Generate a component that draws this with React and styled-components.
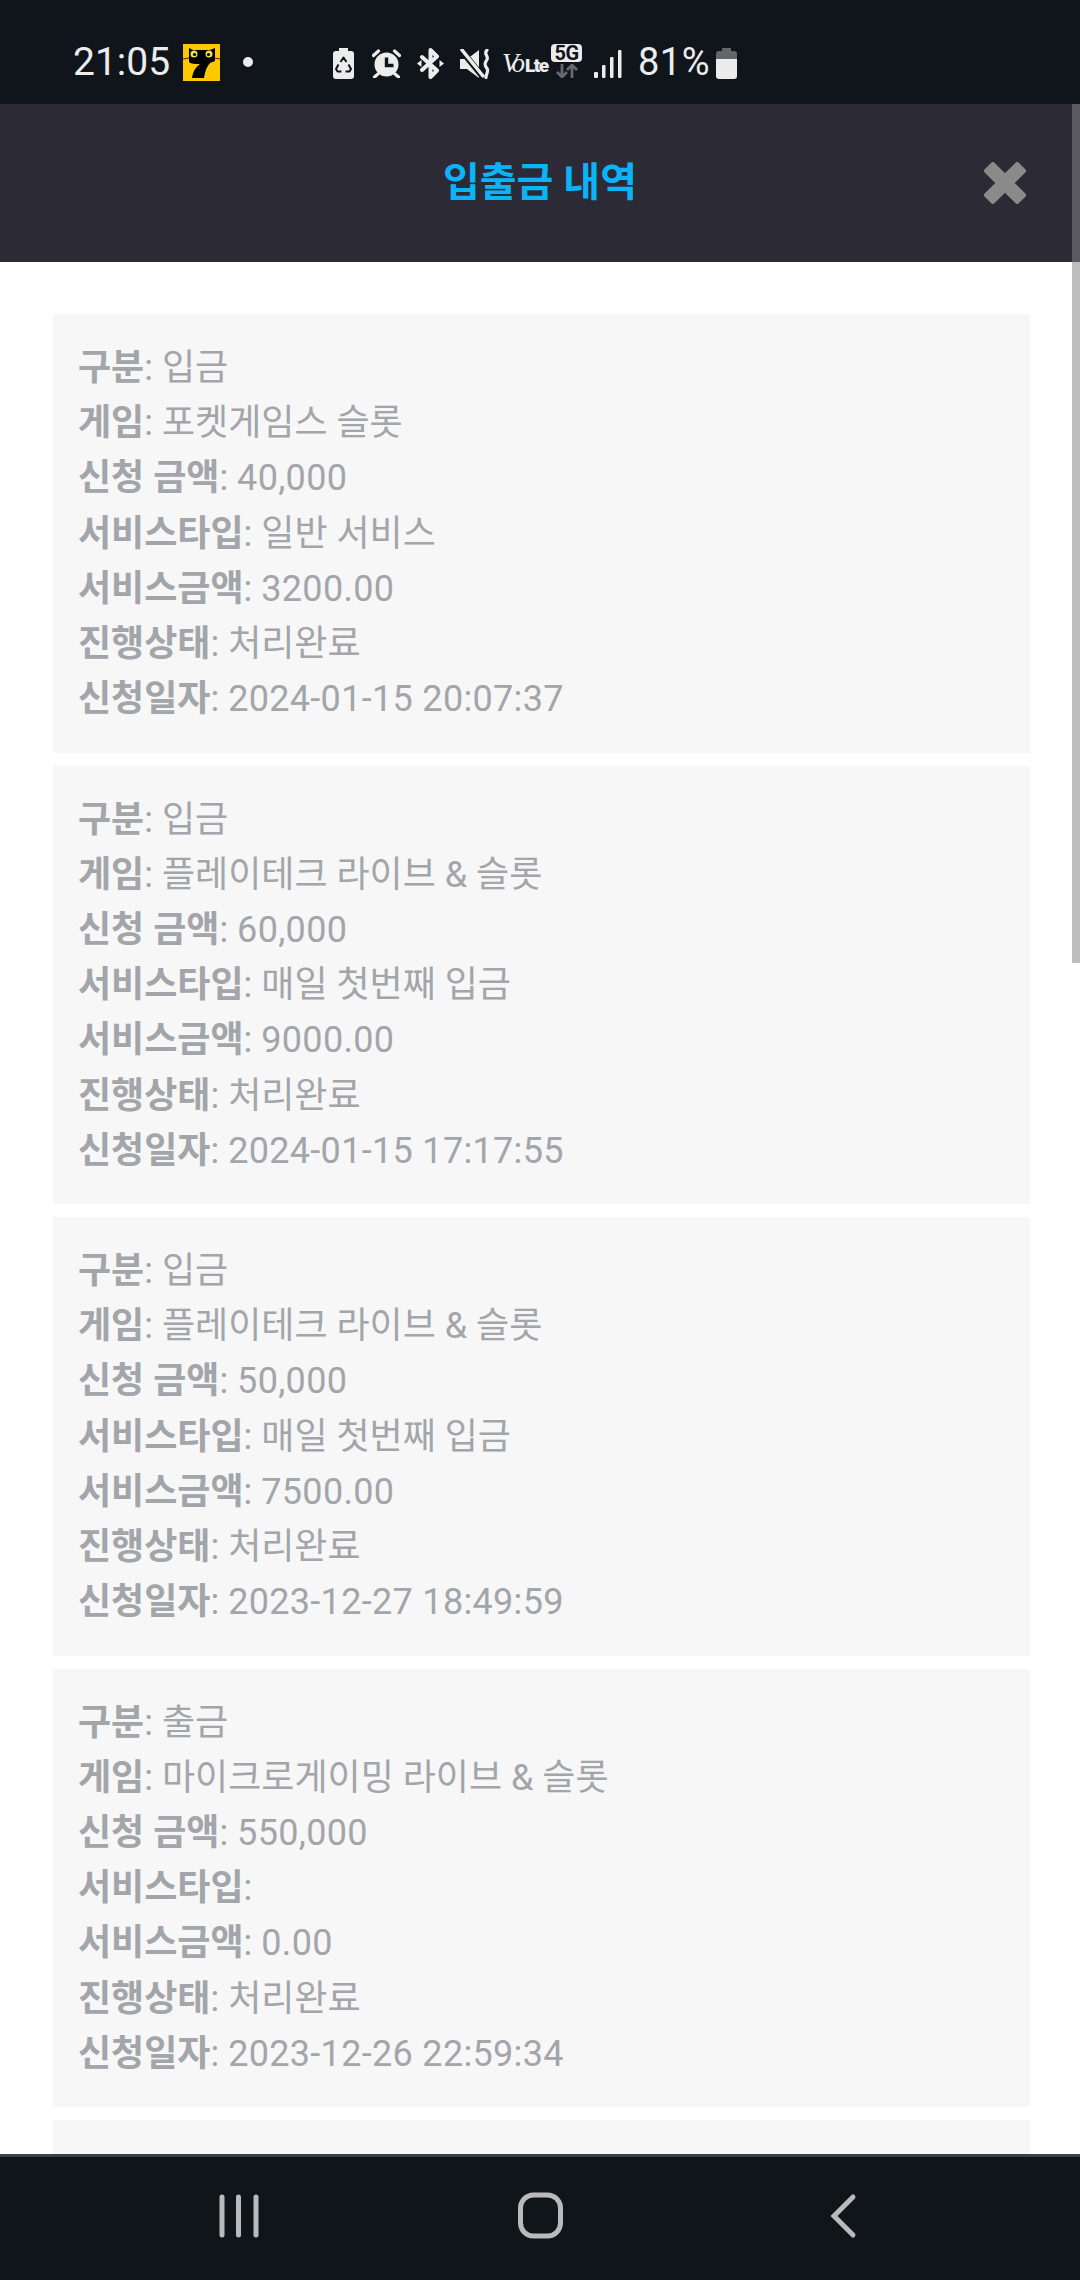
import styled, { createGlobalStyle } from 'styled-components'

const GlobalStyle = createGlobalStyle`
  html, body {
    margin: 0;
    padding: 0;
    background: #fff;
  }
  * {
    box-sizing: border-box;
  }
`

const Screen = styled.div`
  width: 1080px;
  height: 2280px;
  display: flex;
  flex-direction: column;
  overflow: hidden;
  font-family: Roboto, "Noto Sans CJK KR", sans-serif;
`

const StatusBar = styled.div`
  height: 104px;
  flex: none;
  display: flex;
  align-items: center;
  padding: 20px 0 0 73px;
  background: #10151b;
  color: #ececec;
`

const Clock = styled.span`
  font-size: 39px;
  width: 110px;
`

const Percent = styled.span`
  font-size: 38px;
  letter-spacing: 0.5px;
  margin: -3px 0 0 16px;
`

const StatusIcons = styled.div`
  display: flex;
  align-items: center;
  margin: 3px 0 0 80px;
`

const AppBadge = styled.svg`
  width: 37px;
  height: 37px;
  flex: none;
`

const NotifDot = styled.span`
  width: 10px;
  height: 10px;
  margin-left: 23px;
  border-radius: 50%;
  background: #ececec;
`

const Glyph = styled.svg`
  flex: none;
  width: ${(p) => p.$w}px;
  height: ${(p) => p.$h}px;
  margin-left: ${(p) => p.$gap || 0}px;
`

const Volte = styled.span`
  display: flex;
  align-items: baseline;
  width: 41px;
  margin-left: 12px;
  white-space: nowrap;
`

const VoMark = styled.span`
  font-family: "Liberation Serif", serif;
  font-style: italic;
  font-size: 27px;
  letter-spacing: -4px;
`

const LteMark = styled.span`
  font-size: 19px;
  font-weight: 900;
  letter-spacing: -1.5px;
  margin-left: 4px;
`

const FiveG = styled.div`
  display: flex;
  flex-direction: column;
  align-items: center;
  gap: 2px;
  margin: 0 0 5px 8px;
`

const FiveGMark = styled.span`
  width: 31px;
  height: 18px;
  display: flex;
  align-items: center;
  justify-content: center;
  border-radius: 4px;
  background: #ececec;
  color: #10151b;
  font-size: 20px;
  font-weight: 700;
  letter-spacing: -0.5px;
`

const Body = styled.div`
  flex: 1;
  min-height: 0;
  position: relative;
  display: flex;
  flex-direction: column;
`

const Header = styled.header`
  height: 158px;
  flex: none;
  position: relative;
  display: flex;
  align-items: center;
  justify-content: center;
  padding-bottom: 8px;
  background: #2c2b35;
`

const Title = styled.h1`
  margin: 0;
  font-size: 40px;
  font-weight: 700;
  color: #0bb4f8;
`

const CloseIcon = styled.svg`
  position: absolute;
  right: 54px;
  top: 58px;
  width: 42px;
  height: 42px;
`

const List = styled.div`
  flex: 1;
  min-height: 0;
  overflow: hidden;
  display: flex;
  flex-direction: column;
  gap: 13px;
  padding: 52px 50px 0 53px;
`

const Card = styled.article`
  flex: none;
  height: 438.5px;
  padding: 27px 25px;
  background: #f7f7f7;
  color: #a2a5a9;
  font-size: 36px;
  line-height: 55.2px;
`

const Row = styled.div`
  white-space: nowrap;
`

const Label = styled.b`
  font-weight: 700;
`

const Value = styled.span`
  letter-spacing: ${(p) => (p.$numeric ? '0.32px' : '0')};
`

const Scrollbar = styled.div`
  position: absolute;
  top: 0;
  right: 0;
  width: 8px;
  display: flex;
  flex-direction: column;
`

const ScrollHead = styled.div`
  height: 158px;
  background: #5a5960;
`

const ScrollThumb = styled.div`
  height: 701px;
  background: #bdbdbd;
`

const NavBar = styled.nav`
  flex: none;
  height: 126px;
  display: block;
  border-top: 3px solid #3c4045;
  background: #10151a;
`

const NavIcons = styled.svg`
  display: block;
  width: 1080px;
  height: 123px;
`

const rows = [
  { kind: '입금', game: '포켓게임스 슬롯', amount: '40,000', type: '일반 서비스', bonus: '3200.00', date: '2024-01-15 20:07:37' },
  { kind: '입금', game: '플레이테크 라이브 & 슬롯', amount: '60,000', type: '매일 첫번째 입금', bonus: '9000.00', date: '2024-01-15 17:17:55' },
  { kind: '입금', game: '플레이테크 라이브 & 슬롯', amount: '50,000', type: '매일 첫번째 입금', bonus: '7500.00', date: '2023-12-27 18:49:59' },
  { kind: '출금', game: '마이크로게이밍 라이브 & 슬롯', amount: '550,000', type: '', bonus: '0.00', date: '2023-12-26 22:59:34' },
]

function HistoryCard({ item }) {
  return (
    <Card>
      <Row><Label>구분</Label>: {item.kind}</Row>
      <Row><Label>게임</Label>: {item.game}</Row>
      <Row><Label>신청 금액</Label>: <Value $numeric>{item.amount}</Value></Row>
      <Row><Label>서비스타입</Label>: {item.type}</Row>
      <Row><Label>서비스금액</Label>: <Value $numeric>{item.bonus}</Value></Row>
      <Row><Label>진행상태</Label>: 처리완료</Row>
      <Row><Label>신청일자</Label>: <Value $numeric>{item.date}</Value></Row>
    </Card>
  )
}

function StatusGlyphs() {
  const light = '#ececec'
  const dark = '#10151b'
  return (
    <StatusIcons>
      {/* battery saver */}
      <Glyph $w={21} $h={31} viewBox="0 0 21 31">
        <path d="M6 0h9v3h3a3 3 0 0 1 3 3v22a3 3 0 0 1-3 3H3a3 3 0 0 1-3-3V6a3 3 0 0 1 3-3h3z" fill={light} />
        <path d="M7.5 14l3-4.5 3 4.5M15.5 16.5l2.5 4.5-1.5 2.5h-4M5.5 16.5L3 21l1.5 2.5h4" fill="none" stroke={dark} strokeWidth="2" strokeLinejoin="round" />
      </Glyph>
      {/* alarm */}
      <Glyph $w={29} $h={29} $gap={18} viewBox="0 0 29 29">
        <circle cx="14.5" cy="15.5" r="12" fill={light} />
        <path d="M1.5 6.5l5-4.500M22.5 2l5 4.500M6 25l-3.5 3M23 25l3.5 3" stroke={light} strokeWidth="3.2" strokeLinecap="round" />
        <path d="M14.5 8.500v8h7" fill="none" stroke={dark} strokeWidth="3.4" />
      </Glyph>
      {/* bluetooth */}
      <Glyph $w={27} $h={31} $gap={16} viewBox="0 0 27 31">
        <path d="M5 9l15 13.500L13.500 29V2l6.500 6.500L5 22" fill="none" stroke={light} strokeWidth="4" strokeLinejoin="round" strokeLinecap="round" />
        <path d="M0 15.500l4.500-3.500v7zM27 15.500l-4.500-3.500v7z" fill={light} />
      </Glyph>
      {/* mute + vibrate */}
      <Glyph $w={30} $h={30} $gap={16} viewBox="0 0 30 30">
        <path d="M0 10h7l12-9v28L7 20H0z" fill={light} />
        <path d="M1 1l22 27" stroke={dark} strokeWidth="6" />
        <path d="M2 1l21 26" stroke={light} strokeWidth="3.5" strokeLinecap="round" />
        <path d="M27 1c-4 4 2 6 0 9.500s-3 5 0 9c2 3-1 5-1 9" fill="none" stroke={light} strokeWidth="3.2" strokeLinecap="round" />
      </Glyph>
      <Volte>
        <VoMark>Vo</VoMark>
        <LteMark>Lte</LteMark>
      </Volte>
      <FiveG>
        <FiveGMark>5G</FiveGMark>
        <Glyph $w={22} $h={14} viewBox="0 0 22 14">
          <path d="M6 0v13M1 8l5 5 5-5" fill="none" stroke="#666a6e" strokeWidth="2.8" />
          <path d="M16 14V1M11 6l5-5 5 5" fill="none" stroke="#666a6e" strokeWidth="2.8" />
        </Glyph>
      </FiveG>
      {/* signal */}
      <Glyph $w={28} $h={29} $gap={12} viewBox="0 0 28 29">
        <rect x="0" y="23" width="4" height="6" rx="1" fill={light} />
        <rect x="8" y="16" width="3.5" height="13" rx="1" fill={light} />
        <rect x="16" y="8" width="3.5" height="21" rx="1" fill={light} />
        <rect x="24" y="1" width="3.5" height="28" rx="1" fill={light} />
      </Glyph>
      <Percent>81%</Percent>
      {/* battery */}
      <Glyph $w={21} $h={31} $gap={6} viewBox="0 0 21 31">
        <path d="M6 0h9v3h3a3 3 0 0 1 3 3v5H0V6a3 3 0 0 1 3-3h3z" fill="#63676b" />
        <path d="M0 11h21v17a3 3 0 0 1-3 3H3a3 3 0 0 1-3-3z" fill={light} />
      </Glyph>
    </StatusIcons>
  )
}

export default function App() {
  return (
    <>
      <GlobalStyle />
      <Screen>
        <StatusBar>
          <Clock>21:05</Clock>
          <AppBadge viewBox="0 0 37 37">
            <rect width="37" height="37" fill="#fdc800" />
            <path d="M6 4l4 2h17l5-2v13l-5 2c-3 3-5 8-6 15H9c1-7 4-11 8-14-5 0-9 0-11-2z" fill="#000" />
            <circle cx="11" cy="10" r="3.5" fill="#f6e24a" />
            <circle cx="26" cy="10" r="3.5" fill="#f6e24a" />
            <circle cx="11.5" cy="10.5" r="1.6" fill="#000" />
            <circle cx="25.5" cy="10.5" r="1.6" fill="#000" />
            <path d="M0 15l6-1M37 15l-6-1" stroke="#3a3000" strokeWidth="1" />
          </AppBadge>
          <NotifDot />
          <StatusGlyphs />
        </StatusBar>
        <Body>
          <Header>
            <Title>입출금 내역</Title>
            <CloseIcon viewBox="2 2 38 38">
              <path d="M10 4l11 11L32 4l6 6-11 11 11 11-6 6-11-11-11 11-6-6 11-11L4 10z" fill="#8a8a8a" stroke="#8a8a8a" strokeWidth="4" strokeLinejoin="round" />
            </CloseIcon>
          </Header>
          <List>
            {rows.map((item) => (
              <HistoryCard key={item.date} item={item} />
            ))}
            <Card />
          </List>
          <Scrollbar>
            <ScrollHead />
            <ScrollThumb />
          </Scrollbar>
        </Body>
        <NavBar>
          <NavIcons viewBox="0 0 1080 123">
            <g stroke="#b9babb" strokeWidth="5" strokeLinecap="round" fill="none">
              <path d="M222 40v38M238.5 40v38M256 40v38" />
              <rect x="520.5" y="38" width="40" height="41" rx="13" />
              <path d="M853 40l-19 19 19 19" />
            </g>
          </NavIcons>
        </NavBar>
      </Screen>
    </>
  )
}
